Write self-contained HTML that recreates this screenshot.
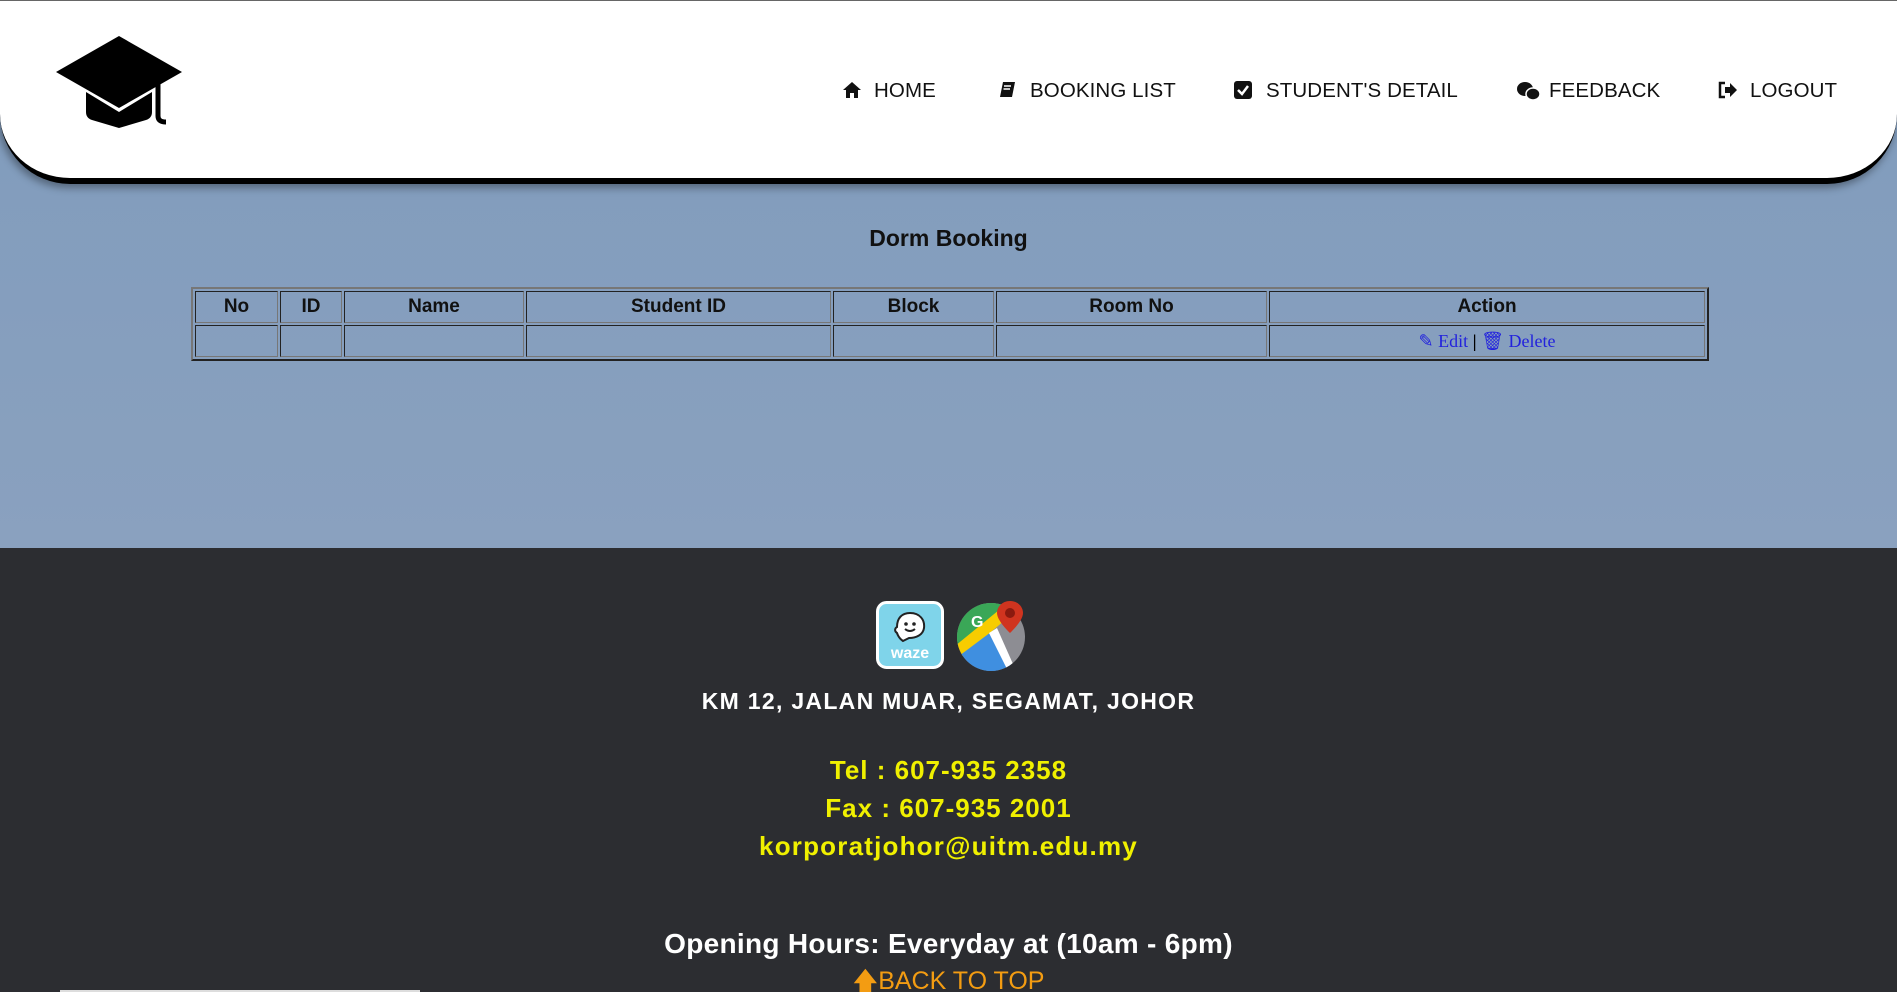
<!DOCTYPE html>
<html><head><meta charset="utf-8"><style>
*{margin:0;padding:0;box-sizing:border-box}
html,body{width:1897px;height:992px;overflow:hidden}
body{font-family:"Liberation Sans",sans-serif;background:#2c2d31;position:relative}
#main{position:absolute;left:0;top:0;width:1897px;height:548px;background:linear-gradient(180deg,#7f9bbc 0%,#8aa1bf 100%)}
#hdr{position:absolute;left:0;top:0;width:1897px;height:184px;background:#fff;border-top:1px solid #666;border-bottom:6px solid #000;border-radius:0 0 70px 70px;box-shadow:-2px 4px 8px rgba(0,0,0,.35)}
.nav{position:absolute;top:78px;font-size:20.5px;color:#111;letter-spacing:.1px;white-space:nowrap}
.nav svg{position:absolute;left:-32px;top:2px}
h2{position:absolute;left:0;width:1897px;top:225px;text-align:center;font-size:23px;font-weight:bold;color:#111}
table{position:absolute;left:191px;top:287px;width:1518px;border-collapse:separate;border-spacing:2px;border:2px solid #777;border-bottom-color:#222;border-right-color:#222}
td,th{border:1px solid #777;border-top-color:#222;border-left-color:#222;height:32px;font-size:19px;color:#111;text-align:center}
td{font-family:"Liberation Serif",serif;font-size:18px;color:#22d}
.f{position:absolute;left:0;width:1897px;text-align:center;white-space:nowrap;font-weight:bold}
</style></head><body>
<div id="main"></div>
<div id="hdr">
<svg style="position:absolute;left:56px;top:35px" width="126" height="92" viewBox="0 0 126 92"><path d="M63 0 L126 36 L63 72 L0 36 Z" fill="#000"/><path d="M30 56 L63 76 L96 56 L96 76 Q96 82 90 84 L63 92 L36 84 Q30 82 30 76 Z" fill="#000"/><path d="M102 40 L102 80 Q102 86 110 86" stroke="#000" stroke-width="5" fill="none"/></svg>
<div class="nav" style="left:874px"><svg width="20" height="18" viewBox="0 0 20 18"><path d="M10 1 L19 9 H16 V17 H12 V12 H8 V17 H4 V9 H1 Z" fill="#111"/></svg>HOME</div>
<div class="nav" style="left:1030px"><svg width="18" height="18" viewBox="0 0 18 18"><path d="M5 1 H17 L14 16 H2 Z" fill="#111"/><path d="M6 5 H13 M5.5 8 H12" stroke="#fff" stroke-width="1.5"/></svg>BOOKING LIST</div>
<div class="nav" style="left:1266px"><svg width="18" height="18" viewBox="0 0 18 18"><rect x="0" y="0" width="18" height="18" rx="3" fill="#111"/><path d="M4 9 L8 13 L14 5" stroke="#fff" stroke-width="2.5" fill="none"/></svg>STUDENT'S DETAIL</div>
<div class="nav" style="left:1549px"><svg width="24" height="20" viewBox="0 0 24 20"><ellipse cx="8" cy="8" rx="8" ry="7" fill="#111"/><ellipse cx="16" cy="13" rx="7" ry="6" fill="#111" stroke="#fff" stroke-width="1.5"/></svg>FEEDBACK</div>
<div class="nav" style="left:1750px"><svg width="20" height="18" viewBox="0 0 20 18"><path d="M7 2 H2 V16 H7" stroke="#111" stroke-width="2.5" fill="none"/><path d="M7 6 H12 V2 L19 9 L12 16 V12 H7 Z" fill="#111"/></svg>LOGOUT</div>
</div>
<h2>Dorm Booking</h2>
<table><tr><th style="width:83px">No</th><th style="width:62px">ID</th><th style="width:180px">Name</th><th style="width:305px">Student ID</th><th style="width:161px">Block</th><th style="width:271px">Room No</th><th>Action</th></tr>
<tr><td></td><td></td><td></td><td></td><td></td><td></td><td>✎ Edit <b style="color:#000">|</b> 🗑 Delete</td></tr></table>
<svg style="position:absolute;left:876px;top:601px" width="68" height="68" viewBox="0 0 68 68"><rect x="1.5" y="1.5" width="65" height="65" rx="9" fill="#7fd4ea" stroke="#fff" stroke-width="3"/><path d="M34 12 C44 12 49 19 48 27 C47 34 40 37 33 37 L27 40 C24 38 22 35 21 32 C18 30 19 27 21 26 C21 17 26 12 34 12Z" fill="#fff" stroke="#222" stroke-width="2"/><circle cx="30" cy="23" r="1.8" fill="#222"/><circle cx="38" cy="23" r="1.8" fill="#222"/><path d="M29 28 Q34 32 39 28" stroke="#222" stroke-width="2" fill="none"/><text x="34" y="57" text-anchor="middle" font-size="16" font-weight="bold" fill="#fff" font-family="Liberation Sans">waze</text></svg>
<svg style="position:absolute;left:955px;top:601px" width="72" height="70" viewBox="0 0 72 70"><clipPath id="c"><circle cx="36" cy="36" r="34"/></clipPath><g clip-path="url(#c)"><rect width="72" height="72" fill="#8d8d93"/><path d="M0 0 H55 L0 50Z" fill="#3aa757"/><path d="M0 45 L55 0 H72 L0 62Z" fill="#f7cc00"/><path d="M0 58 L40 28 L60 72 H0Z" fill="#3f8fe0"/><path d="M34 32 L42 27 L62 72 H54Z" fill="#fff"/></g><text x="16" y="26" font-size="16" font-weight="bold" fill="#fff" font-family="Liberation Sans">G</text><path d="M55 0 C47 0 42 6 42 12 C42 20 55 32 55 32 C55 32 68 20 68 12 C68 6 63 0 55 0Z" fill="#d0341f"/><circle cx="55" cy="12" r="5" fill="#8a1a0f"/></svg>
<div class="f" style="top:688px;font-size:23px;color:#fff;letter-spacing:1.3px">KM 12, JALAN MUAR, SEGAMAT, JOHOR</div>
<div class="f" style="top:755px;font-size:26px;color:#f0f000;letter-spacing:1px">Tel : 607-935 2358</div>
<div class="f" style="top:793px;font-size:26px;color:#f0f000;letter-spacing:1px">Fax : 607-935 2001</div>
<div class="f" style="top:831px;font-size:26px;color:#f0f000;letter-spacing:1.2px">korporatjohor@uitm.edu.my</div>
<div class="f" style="top:928px;font-size:28px;color:#fff;letter-spacing:.3px">Opening Hours: Everyday at (10am - 6pm)</div>
<div class="f" style="top:962px;font-size:25px;color:#f39c12;font-weight:normal">🡅BACK TO TOP</div>
<div style="position:absolute;left:60px;top:990px;width:360px;height:2px;background:#ddd"></div>
</body></html>
